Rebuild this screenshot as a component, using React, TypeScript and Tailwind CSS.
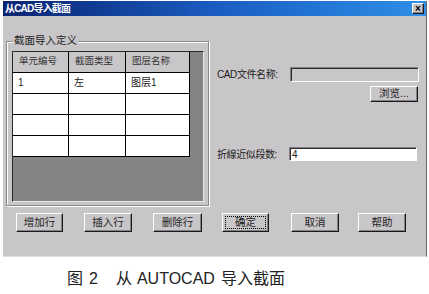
// Dialog screenshot: "从CAD导入截面" (import section from AutoCAD)

const raised =
  'border border-t-white border-l-white border-r-[#1a1a1a] border-b-[#1a1a1a] shadow-[inset_-1px_-1px_0_#848284]';
const sunken =
  'border border-t-[#848284] border-l-[#848284] border-r-white border-b-white shadow-[inset_1px_1px_0_#2a2a2a]';

function Btn({ label, w, focused }: { label: string; w: string; focused?: boolean }) {
  return (
    <div className={`${w} h-[19px] flex bg-[#c8c6c8] ${raised}`}>
      {focused ? (
        <div className="flex-1 m-[2px] border border-dotted border-black flex items-center justify-center text-[10.5px] text-[#222]">
          {label}
        </div>
      ) : (
        <div className="flex-1 flex items-center justify-center text-[10.5px] text-[#222]">{label}</div>
      )}
    </div>
  );
}

const header = ['单元编号', '截面类型', '图层名称'];
const rows = [
  ['1', '左', '图层1'],
  ['', '', ''],
  ['', '', ''],
  ['', '', ''],
];

export default function App() {
  return (
    <div
      className="w-[429px] h-[294px] bg-white overflow-hidden"
      style={{ fontFamily: '"Liberation Sans", "Noto Sans CJK SC", sans-serif' }}
    >
      {/* dialog window */}
      <div className="ml-[3px] mt-[1px] w-[424px] h-[256px] bg-[#c8c6c8] border-r border-b border-r-[#6a686a] border-b-[#e0dee0] flex flex-col">
        {/* title bar */}
        <div className="h-[15px] flex items-center bg-gradient-to-r from-[#0b2473] via-[#1a5cc0] to-[#2f8fe6]">
          <span className="ml-[2px] text-white text-[10px] font-bold tracking-[-0.8px] leading-none">从CAD导入截面</span>
          <div className={`ml-auto mr-[2px] w-[12px] h-[11px] bg-[#c8c6c8] flex items-center justify-center ${raised}`}>
            <span className="text-[10px] leading-none font-bold text-black">×</span>
          </div>
        </div>

        <div className="flex">
          {/* left: group box with grid */}
          <div className="ml-[3px] mt-[25px] w-[203px] h-[165px] relative border border-[#8a888a] shadow-[1px_1px_0_white,inset_1px_1px_0_white]">
            <span className="absolute -top-[7px] left-[6px] px-[1px] bg-[#c8c6c8] text-[10.5px] leading-none text-[#222]">
              截面导入定义
            </span>
            <div className="ml-[5px] mt-[9px] w-[192px] h-[151px] bg-[#858385] border border-t-[#2a2a2a] border-l-[#2a2a2a] border-r-[#e8e6e8] border-b-[#e8e6e8] flex flex-col">
              <div className="grid grid-cols-[56px_57px_64px]">
                {header.map((h) => (
                  <div
                    key={h}
                    className="h-[21px] bg-[#c8c6c8] border-r border-b border-black pt-[2px] pl-[6px] text-[9.5px] text-[#333]"
                  >
                    {h}
                  </div>
                ))}
                {rows.map((r, i) =>
                  r.map((c, j) => (
                    <div
                      key={`${i}-${j}`}
                      className="h-[21px] bg-white border-r border-b border-black pt-[2px] pl-[5px] text-[10px] text-[#222]"
                    >
                      {c}
                    </div>
                  ))
                )}
              </div>
            </div>
          </div>

          {/* right side fields */}
          <div className="ml-[8px] flex flex-col">
            <div className="mt-[51px] flex items-center h-[15px]">
              <span className="w-[73px] text-[10px] tracking-[-0.4px] text-[#222]">CAD文件名称:</span>
              <div className={`w-[129px] h-[15px] bg-[#c8c6c8] ${sunken}`} />
            </div>
            <div className="mt-[4px] ml-[153px]">
              <div className={`w-[48px] h-[16px] bg-[#c8c6c8] flex items-center justify-center ${raised}`}>
                <span className="text-[10.5px] text-[#222]">浏览...</span>
              </div>
            </div>
            <div className="mt-[45px] flex items-center h-[14px]">
              <span className="w-[72px] text-[10px] tracking-[-0.4px] text-[#222]">折線近似段数:</span>
              <div className={`w-[128px] h-[14px] bg-white flex items-center pl-[2px] text-[10px] text-[#222] ${sunken}`}>4</div>
            </div>
          </div>
        </div>

        {/* bottom buttons */}
        <div className="mt-[7px] ml-[13px] flex">
          <Btn label="增加行" w="w-[47px]" />
          <div className="w-[21px]" />
          <Btn label="插入行" w="w-[48px]" />
          <div className="w-[21px]" />
          <Btn label="删除行" w="w-[49px]" />
          <div className="w-[20px]" />
          <Btn label="确定" w="w-[47px]" focused />
          <div className="w-[22px]" />
          <Btn label="取消" w="w-[48px]" />
          <div className="w-[19px]" />
          <Btn label="帮助" w="w-[48px]" />
        </div>
      </div>

      {/* caption */}
      <div className="mt-[14px] ml-[67px] flex items-center text-[16px] leading-none text-[#222]">
        <span>图</span>
        <span className="ml-[6px]">2</span>
        <span className="ml-[18px]">从</span>
        <span className="ml-[5px]">AUTOCAD</span>
        <span className="ml-[6px]">导入截面</span>
      </div>
    </div>
  );
}
